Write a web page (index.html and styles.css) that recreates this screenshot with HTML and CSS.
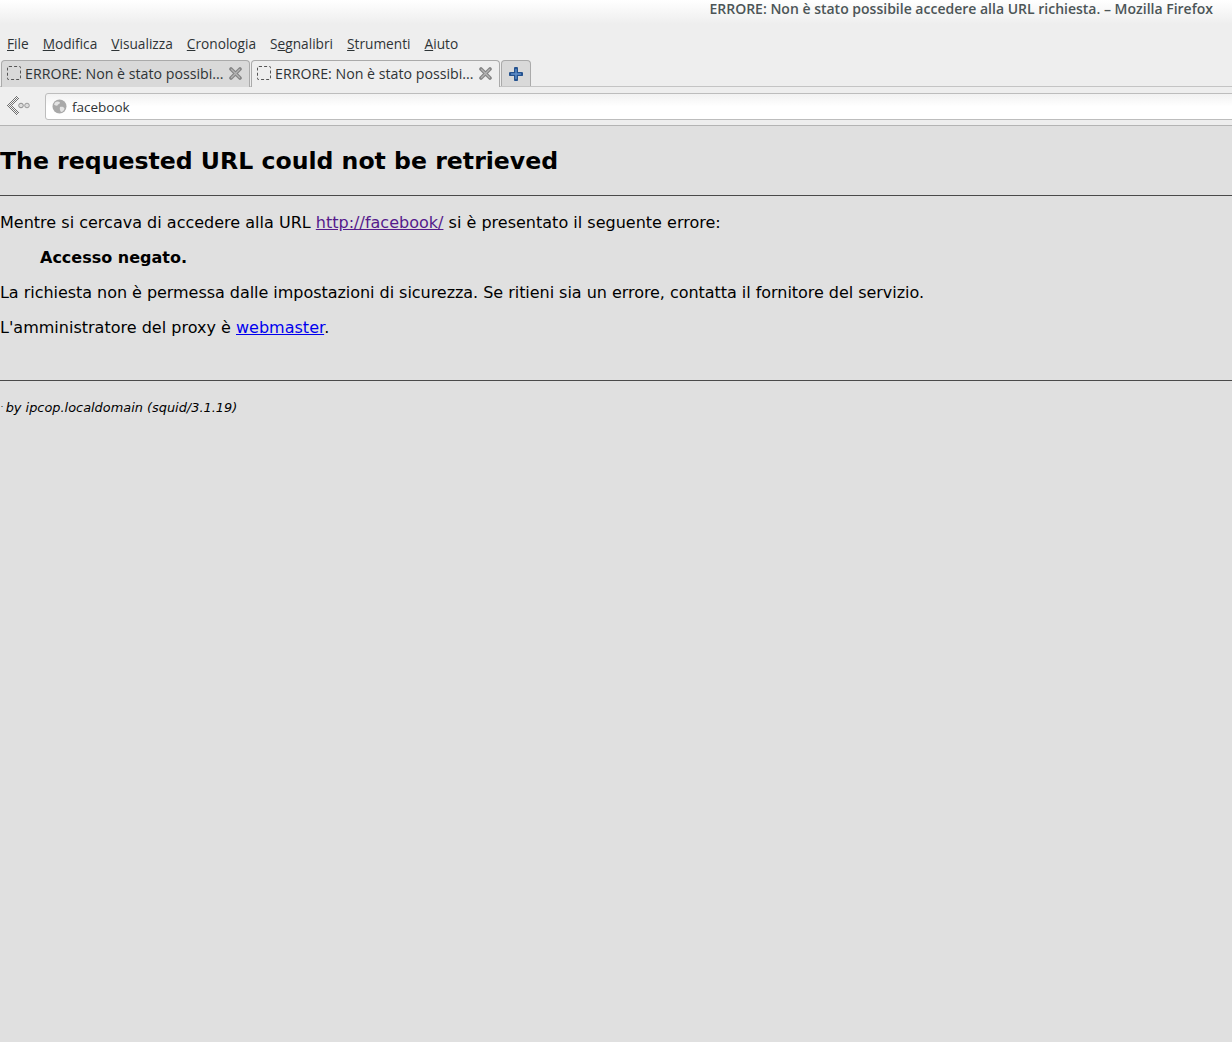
FILE: index.html
```html
<!DOCTYPE html>
<html lang="it">
<head>
<meta charset="utf-8">
<title>ERRORE: Non è stato possibile accedere alla URL richiesta.</title>
<link rel="stylesheet" href="styles.css">
</head>
<body>
<header class="chrome">
  <div class="titlebar"><span class="wintitle">ERRORE: Non è stato possibile accedere alla URL richiesta. – Mozilla Firefox</span></div>
  <nav class="menubar">
    <span><u>F</u>ile</span><span><u>M</u>odifica</span><span><u>V</u>isualizza</span><span><u>C</u>ronologia</span><span>S<u>e</u>gnalibri</span><span><u>S</u>trumenti</span><span><u>A</u>iuto</span>
  </nav>
  <div class="tabbar">
    <div class="tab">
      <span class="favicon"></span><span class="tabtitle">ERRORE: Non è stato possibi...</span>
      <svg class="close" width="13" height="13" viewBox="0 0 13 13"><path d="M2 2l9 9M11 2l-9 9" stroke="#858585" stroke-width="3.600" stroke-linecap="round"/><path d="M2.500 2.500l8 8M10.500 2.500l-8 8" stroke="#b4b4b4" stroke-width="1.200" stroke-linecap="round"/></svg>
    </div>
    <div class="tab active">
      <span class="favicon"></span><span class="tabtitle">ERRORE: Non è stato possibi...</span>
      <svg class="close" width="13" height="13" viewBox="0 0 13 13"><path d="M2 2l9 9M11 2l-9 9" stroke="#858585" stroke-width="3.600" stroke-linecap="round"/><path d="M2.500 2.500l8 8M10.500 2.500l-8 8" stroke="#b4b4b4" stroke-width="1.200" stroke-linecap="round"/></svg>
    </div>
    <div class="newtab">
      <svg width="14" height="14" viewBox="0 0 14 14"><path d="M7 1.500v11M1.500 7h11" stroke="#24528f" stroke-width="4" stroke-linecap="round"/><path d="M7 2.500v9M2.500 7h9" stroke="#5f8fcb" stroke-width="1.400" stroke-linecap="round"/></svg>
    </div>
  </div>
  <div class="navbar">
    <svg class="back" width="24" height="22" viewBox="0 0 24 22">
      <defs>
        <pattern id="dither" width="2" height="2" patternUnits="userSpaceOnUse">
          <rect width="2" height="2" fill="#f4f4f4"/>
          <rect width="1" height="1" fill="#707070"/>
          <rect x="1" y="1" width="1" height="1" fill="#707070"/>
        </pattern>
      </defs>
      <path d="M9 0L0 10.500L9 21L12 18L6.500 10.500L12 3z" fill="url(#dither)" shape-rendering="crispEdges"/>
      <circle cx="14" cy="10.500" r="2.300" fill="#dcdcdc" stroke="#8e8e8e"/>
      <circle cx="20" cy="10.500" r="2.300" fill="#dcdcdc" stroke="#9a9a9a"/>
    </svg>
    <div class="urlbar">
      <svg class="globe" width="15" height="15" viewBox="0 0 15 15"><circle cx="7.500" cy="7.500" r="7" fill="#a9a9a9"/><path d="M3 3.500c2-1.500 4-1 5 0 0 1.500-2 1.500-2.500 3C4 7 2.500 6 2 5.500zM8 8c2-.5 4 0 4.500 1.500-.5 2-2 3.500-3.500 3.500-1-1.500-1.500-3-1-5z" fill="#e4e4e4"/></svg>
      <span class="urltext">facebook</span>
    </div>
  </div>
</header>
<main class="page">
  <h1>The requested URL could not be retrieved</h1>
  <hr>
  <p class="wide">Mentre si cercava di accedere alla URL <a class="visited" href="#">http://facebook/</a> si è presentato il seguente errore:</p>
  <blockquote><p><b>Accesso negato.</b></p></blockquote>
  <p class="tight">La richiesta non è permessa dalle impostazioni di sicurezza. Se ritieni sia un errore, contatta il fornitore del servizio.</p>
  <p class="wide">L'amministratore del proxy è <a class="link" href="#">webmaster</a>.</p>
  <hr class="lower">
  <address><span class="dot">.</span> by ipcop.localdomain (squid/3.1.19)</address>
</main>
</body>
</html>
```
FILE: styles.css
```css
* { box-sizing: border-box; }
html, body { margin: 0; height: 100%; }
body {
  display: flex;
  flex-direction: column;
  height: 1042px;
  overflow: hidden;
  background: #e0e0e0;
  font-family: "DejaVu Sans", sans-serif;
  color: #000;
}
.chrome {
  font-family: "Open Sans", "Noto Sans", sans-serif;
  font-size: 13.7px;
  color: #2e3436;
  background: #eeeeee;
}
.titlebar {
  height: 24px;
  background: linear-gradient(#ffffff, #eeeeee);
  display: flex;
  justify-content: flex-end;
  align-items: center;
  padding-right: 19px;
  padding-bottom: 7px;
}
.wintitle { font-weight: 600; color: #4c5557; font-size: 14px; }
.menubar {
  height: 36px;
  display: flex;
  gap: 14px;
  padding: 10px 0 0 7px;
  line-height: 20px;
}
.tabbar {
  height: 27px;
  display: flex;
  padding-left: 1px;
  gap: 1px;
  border-bottom: 1px solid #c4c4c4;
}
.tab {
  width: 249px;
  height: 27px;
  display: flex;
  align-items: center;
  padding: 0 7px 2px 5px;
  background: #d9d9d9;
  border: 1px solid #aaaaaa;
  border-bottom: none;
  border-radius: 4px 4px 0 0;
  font-size: 14.2px;
}
.tab.active {
  background: #eeeeee;
  position: relative;
  z-index: 1;
}
.favicon {
  width: 14px;
  height: 14px;
  border: 1px dashed #555;
  border-radius: 2px;
  flex: none;
  margin-right: 4px;
}
.tabtitle { flex: 1; white-space: nowrap; overflow: hidden; }
.close { flex: none; }
.newtab {
  width: 30px;
  height: 26px;
  background: #d9d9d9;
  border: 1px solid #aaaaaa;
  border-bottom: none;
  border-radius: 4px 4px 0 0;
  display: flex;
  align-items: center;
  justify-content: center;
}
.navbar {
  height: 39px;
  display: flex;
  align-items: flex-start;
  padding: 6px 0 0 7px;
  background: #eeeeee;
  border-bottom: 1px solid #b4b4b4;
}
.back { flex: none; margin-top: 2px; }
.urlbar {
  flex: 1;
  height: 27px;
  margin-left: 14px;
  margin-right: -4px;
  display: flex;
  align-items: center;
  padding-left: 6px;
  background: linear-gradient(#f2f2f2, #ffffff 50%);
  border: 1px solid #bdbdbd;
  border-radius: 3px;
  color: #2e3436;
}
.globe { flex: none; margin-right: 5px; }
.urltext { font-size: 13.5px; }
.page {
  flex: 1;
  background: #e0e0e0;
  font-size: 16px;
  line-height: 19px;
}
h1 {
  margin: 0;
  padding-top: 20px;
  height: 69px;
  font-size: 23.6px;
  line-height: 30px;
  font-weight: 700;
}
hr {
  margin: 0;
  border: none;
  height: 1px;
  background: #4a4a4a;
}
p { margin: 0; padding-top: 16px; }
main > hr + p { padding-top: 17px; }
blockquote { margin: 0 0 0 40px; }
.tight { letter-spacing: -0.04px; }
.wide { letter-spacing: 0.01px; }
.lower { margin-top: 43px; }
.visited { color: #551a8b; }
.link { color: #0000ee; }
address {
  padding-top: 16px;
  font-size: 12.9px;
  line-height: 16px;
  font-style: italic;
}
.dot { font-size: 8px; vertical-align: 5px; margin-left: 1px; margin-right: -2px; }
```
